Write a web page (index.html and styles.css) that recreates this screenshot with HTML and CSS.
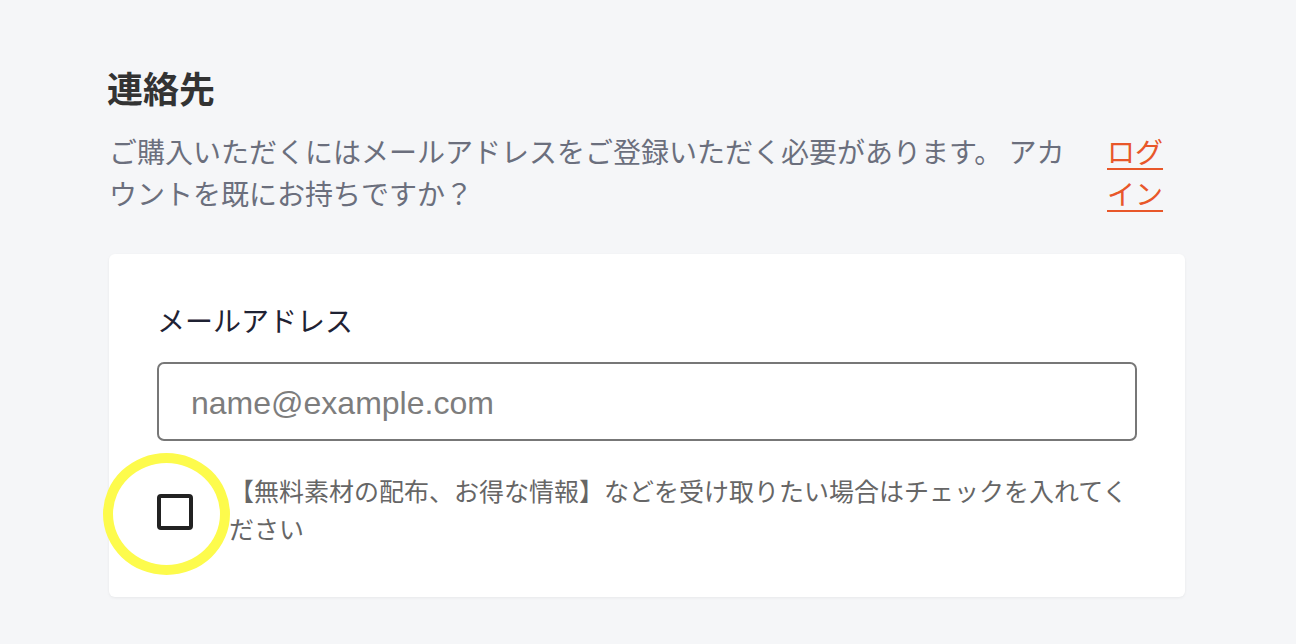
FILE: index.html
```html
<!DOCTYPE html>
<html lang="ja">
<head>
<meta charset="utf-8">
<link rel="stylesheet" href="styles.css">
</head>
<body>
<main class="section">
  <h2 class="title">連絡先</h2>
  <div class="intro">
    <p class="intro-text">ご購入いただくにはメールアドレスをご登録いただく必要があります。 アカウントを既にお持ちですか？</p>
    <a class="login" href="#">ログイン</a>
  </div>
  <div class="card">
    <label class="field-label" for="email">メールアドレス</label>
    <input class="field-input" id="email" type="email" placeholder="name@example.com">
    <div class="check-row">
      <span class="check-wrap">
        <span class="checkbox"></span>
        <span class="highlight"></span>
      </span>
      <span class="check-text">【無料素材の配布、お得な情報】などを受け取りたい場合はチェックを入れてください</span>
    </div>
  </div>
</main>
</body>
</html>
```
FILE: styles.css
```css
html, body {
  margin: 0;
  padding: 0;
}
body {
  background: #f5f6f8;
  font-family: "Noto Sans CJK JP", "Noto Sans", sans-serif;
  width: 1296px;
  height: 644px;
  overflow: hidden;
}
.section {
  width: 1076px;
  margin-left: 109px;
  padding-top: 60px;
}
.title {
  margin: 0;
  font-size: 36px;
  line-height: 54px;
  font-weight: 700;
  color: #333333;
  margin-left: -2px;
}
.intro {
  display: flex;
  margin-top: 16px;
}
.intro-text {
  flex: 1;
  margin: 0;
  font-size: 28px;
  line-height: 42px;
  color: #6b6f7d;
}
.login {
  flex: 0 0 56px;
  margin-left: 30px;
  margin-right: 22px;
  font-size: 28px;
  line-height: 42px;
  color: #e8572a;
  text-decoration: underline;
  text-decoration-thickness: 2px;
  text-underline-offset: 5px;
}
.card {
  margin-top: 40px;
  background: #ffffff;
  border-radius: 6px;
  box-shadow: 0 1px 3px rgba(0, 0, 0, 0.06);
  padding: 45px 48px 50px;
  display: flex;
  flex-direction: column;
}
.field-label {
  font-size: 28px;
  line-height: 42px;
  color: #1f2233;
}
.field-input {
  margin-top: 21px;
  height: 79px;
  box-sizing: border-box;
  border: 2px solid #777777;
  border-radius: 7px;
  padding: 4px 32px 0;
  font-family: "Liberation Sans", Arial, sans-serif;
  font-size: 32px;
  color: #333;
  background: #fff;
  outline: none;
}
.field-input::placeholder {
  color: #7d7d7d;
}
.check-row {
  margin-top: 30px;
  display: flex;
  align-items: center;
  gap: 36px;
}
.check-wrap {
  position: relative;
  flex: 0 0 36px;
  height: 36px;
  margin-top: 5px;
}
.checkbox {
  display: block;
  width: 36px;
  height: 36px;
  box-sizing: border-box;
  border: 4px solid #222222;
  border-radius: 4px;
}
.highlight {
  position: absolute;
  left: -54px;
  top: -41px;
  width: 127px;
  height: 122px;
  box-sizing: border-box;
  border: 10px solid #fdfb4c;
  border-radius: 50%;
}
.check-text {
  flex: 1;
  font-size: 25px;
  line-height: 38px;
  color: #666666;
}
```
